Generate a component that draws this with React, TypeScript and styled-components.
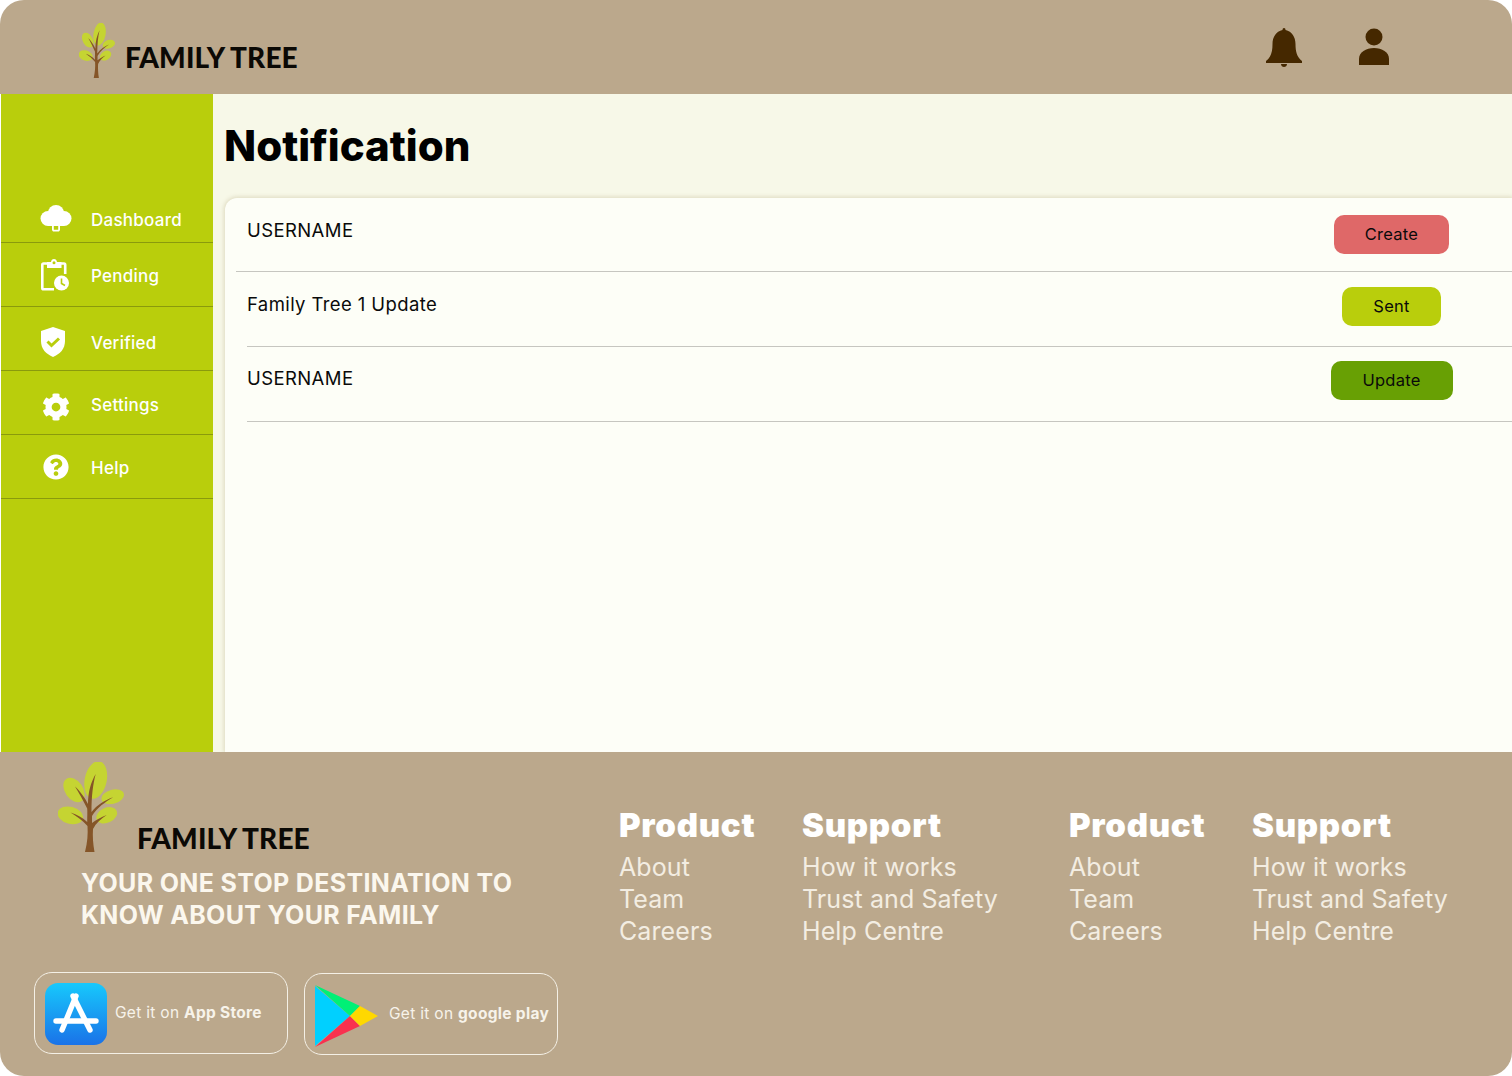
import React from 'react';
import styled, { createGlobalStyle } from 'styled-components';
import { FaCog, FaQuestionCircle } from 'react-icons/fa';

const GlobalStyle = createGlobalStyle`
  html, body {
    margin: 0;
    padding: 0;
    background: #fff;
    font-family: Inter, "Open Sans", sans-serif;
  }
`;

const Page = styled.div`
  width: 1512px;
  height: 1076px;
  display: flex;
  flex-direction: column;
  overflow: hidden;
  border-radius: 24px;
  background: #fff;
`;

const Header = styled.header`
  height: 94px;
  flex: none;
  background: #bba88c;
  display: flex;
  align-items: flex-start;
  justify-content: space-between;
  padding: 23px 122px 0 79px;
  box-sizing: border-box;
`;

const Brand = styled.div`
  display: flex;
  align-items: flex-start;
`;

const TreeSvg = styled.svg<{ $w: number; $h: number }>`
  display: block;
  flex: none;
  width: ${p => p.$w}px;
  height: ${p => p.$h}px;
`;

const BrandName = styled.span<{ $gap: number; $top: number }>`
  margin: ${p => p.$top}px 0 0 ${p => p.$gap}px;
  font-family: "Lato", sans-serif;
  font-weight: 900;
  font-size: 28px;
  line-height: 32px;
  letter-spacing: 0.15px;
  color: #0b0905;
  white-space: nowrap;
`;

const HeaderIcons = styled.div`
  display: flex;
  gap: 56px;
  padding-top: 5px;
  align-items: flex-start;
`;

const Middle = styled.div`
  flex: 1;
  min-height: 0;
  display: flex;
  padding-left: 1px;
`;

const Sidebar = styled.nav`
  width: 212px;
  flex: none;
  background: #b9ce0c;
  padding-top: 92px;
  box-sizing: border-box;
`;

const NavRow = styled.div<{ $h: number }>`
  height: ${p => p.$h}px;
  box-sizing: border-box;
  display: flex;
  align-items: center;
  border-bottom: 1px solid #8a9a0d;
  color: #fff;
  font-size: 17px;
  font-weight: 500;
  letter-spacing: 0.25px;
`;

const NavIcon = styled.span<{ $left: number; $top: number }>`
  width: 90px;
  flex: none;
  box-sizing: border-box;
  padding: ${p => p.$top}px 0 0 ${p => p.$left}px;
  display: flex;
  align-items: center;
`;

const NavLabel = styled.span<{ $top: number }>`
  padding-top: ${p => p.$top}px;
`;

const Main = styled.main`
  flex: 1;
  min-width: 0;
  background: #f7f8e8;
  display: flex;
  flex-direction: column;
`;

const Title = styled.h1`
  margin: 0;
  padding: 26px 0 0 11px;
  height: 104px;
  box-sizing: border-box;
  font-size: 42px;
  line-height: 52px;
  font-weight: 800;
  color: #000;
`;

const Card = styled.section`
  flex: 1;
  margin-left: 12px;
  background: #fdfef7;
  border-top-left-radius: 12px;
  box-shadow: 0 0 4px 1px rgba(190, 180, 140, 0.45);
`;

const Row = styled.div<{ $inset: number; $btnTop: number; $h: number }>`
  height: ${p => p.$h}px;
  box-sizing: border-box;
  margin-left: ${p => p.$inset}px;
  padding: ${p => p.$btnTop}px 59px 0 ${p => 22 - p.$inset}px;
  border-bottom: 1px solid #c6c6c0;
  display: flex;
  justify-content: space-between;
  align-items: flex-start;
`;

const RowText = styled.span<{ $top: number }>`
  margin-top: ${p => p.$top}px;
  font-size: 18.5px;
  line-height: 22px;
  color: #0a0a0a;
  letter-spacing: 0.4px;
`;

const ButtonSlot = styled.div`
  width: 123px;
  display: flex;
  justify-content: center;
`;

const StatusButton = styled.button<{ $bg: string; $w: number }>`
  width: ${p => p.$w}px;
  height: 39px;
  padding: 0 0 2px;
  border: none;
  border-radius: 10px;
  background: ${p => p.$bg};
  color: #0a0a0a;
  font-family: inherit;
  font-size: 16.5px;
  letter-spacing: 0.25px;
`;

const Footer = styled.footer`
  height: 324px;
  flex: none;
  background: #bba88c;
  display: flex;
  box-sizing: border-box;
`;

const FooterLeft = styled.div`
  width: 619px;
  flex: none;
  padding: 10px 0 0 34px;
  box-sizing: border-box;
`;

const FooterBrand = styled.div`
  display: flex;
  align-items: flex-start;
  padding-left: 24px;
`;

const Tagline = styled.p`
  margin: 13px 0 0 47px;
  font-size: 25px;
  line-height: 32px;
  font-weight: 700;
  letter-spacing: 0.33px;
  color: #fbf7ee;
  white-space: nowrap;
`;

const StoreRow = styled.div`
  display: flex;
  gap: 16px;
  margin-top: 41px;
  align-items: flex-start;
`;

const StoreButton = styled.div<{ $top: number; $gap: number }>`
  width: 254px;
  height: 82px;
  box-sizing: border-box;
  margin-top: ${p => p.$top}px;
  border: 1px solid #f4f0e6;
  border-radius: 18px;
  padding: 2px 0 0 10px;
  display: flex;
  align-items: center;
  gap: ${p => p.$gap}px;
  font-size: 15.5px;
  letter-spacing: 0.3px;
  color: #f7f3ea;
  white-space: nowrap;
`;

const StoreText = styled.span`
  padding-bottom: 3px;
`;

const AppIcon = styled.svg`
  width: 62px;
  height: 62px;
  flex: none;
`;

const PlayIcon = styled.svg`
  width: 63px;
  height: 62px;
  flex: none;
  margin-top: 2px;
`;

const Columns = styled.div`
  flex: 1;
  display: grid;
  grid-template-columns: 183px 267px 183px 1fr;
  padding-top: 52px;
  align-items: start;
`;

const Column = styled.div`
  display: flex;
  flex-direction: column;
`;

const ColumnTitle = styled.h3`
  margin: 0 0 5px;
  font-size: 33px;
  line-height: 42px;
  font-weight: 900;
  letter-spacing: 0.7px;
  color: #fff;
`;

const ColumnLink = styled.a`
  font-size: 25px;
  line-height: 32px;
  color: #f3ede2;
  letter-spacing: 0.1px;
  white-space: nowrap;
`;

const Tree: React.FC<{ w: number; h: number }> = ({ w, h }) => (
  <TreeSvg $w={w} $h={h} viewBox="0 0 66 90" preserveAspectRatio="none">
    <g fill="#c5d432">
      <ellipse cx="37.7" cy="18" rx="11" ry="19" transform="rotate(12 37.7 18)" />
      <ellipse cx="16" cy="28" rx="9" ry="13.5" transform="rotate(-35 16 28)" />
      <ellipse cx="54.7" cy="34.7" rx="11.5" ry="7" transform="rotate(-15 54.7 34.7)" />
      <ellipse cx="12.3" cy="53.3" rx="13" ry="8.5" transform="rotate(15 12.3 53.3)" />
      <ellipse cx="48.7" cy="53.3" rx="11" ry="7.5" transform="rotate(-25 48.7 53.3)" />
    </g>
    <path
      fill="#855528"
      d="M27 90 C29.5 80 30 72 29.5 64 C24 58 18 54 12.5 50.5 C19 52.5 25 56 29.2 60 C29.2 54 29.5 50 29.2 46.5 C25 38 21 31 17 24.5 C22 29 27 36 30 42 C30 30 33 20 37.7 12 C35 22 33.5 34 33.5 50 C39 43 47 38 55.3 35.3 C47 40 39 46 34 54 L34 61 C38 58 43 55 48.7 53 C43 57 38 61 35 67 C34.5 74 35 82 36.5 90 Z"
    />
  </TreeSvg>
);

const BellIcon = () => (
  <svg width="36" height="39" viewBox="0 0 36 39" fill="#452800">
    <path d="M18 0 C19 0 19.5 .8 19.5 2 C26 3.5 29.5 9 29.5 16 C29.5 24 31 29 36 33 L36 35 L0 35 L0 33 C5 29 6.5 24 6.5 16 C6.5 9 10 3.5 16.5 2 C16.5 .8 17 0 18 0 Z" />
    <path d="M15 36 L21 36 C21 38 19.5 39 18 39 C16.5 39 15 38 15 36 Z" />
  </svg>
);

const PersonIcon = () => (
  <svg width="32" height="37" viewBox="0 0 32 37" fill="#452800">
    <circle cx="16" cy="9" r="8.5" />
    <path d="M1 37 L1 31 C1 24 8 20 16 20 C24 20 31 24 31 31 L31 37 Z" />
  </svg>
);

const CloudIcon = () => (
  <svg width="32" height="27" viewBox="0 0 32 27" fill="#fff">
    <circle cx="16" cy="8" r="8" />
    <circle cx="8" cy="13.5" r="7.5" />
    <circle cx="24" cy="13.5" r="7.5" />
    <rect x="8" y="8" width="16" height="13" />
    <path d="M12 21 L12 24.5 C12 25.8 12.8 26.6 14 26.6 L18 26.6 C19.2 26.6 20 25.8 20 24.5 L20 21 L18.2 21 L18.2 24.8 L13.8 24.8 L13.8 21 Z" />
  </svg>
);

const PendingIcon = () => (
  <svg width="28" height="32" viewBox="0 0 28 32">
    <path
      fill="none"
      stroke="#fff"
      strokeWidth="2.6"
      strokeLinejoin="round"
      d="M6 4.5 L2.5 4.5 C1.7 4.5 1.3 5 1.3 5.8 L1.3 29 C1.3 29.8 1.7 30.3 2.5 30.3 L13 30.3 M20 4.5 L23 4.5 C23.8 4.5 24.2 5 24.2 5.8 L24.2 15"
    />
    <path fill="#fff" fillRule="evenodd" d="M6 3 L10 3 C10.3 1.2 11.3 0 13 0 C14.7 0 15.7 1.2 16 3 L20.5 3 L20.5 9 L6 9 Z M13 2.2 A1.5 1.5 0 1 0 13 5.2 A1.5 1.5 0 1 0 13 2.2 Z" />
    <circle cx="20.5" cy="24" r="7.5" fill="#fff" />
    <path d="M20.5 19.5 L20.5 24.5 L24 26.5" fill="none" stroke="#b9ce0c" strokeWidth="1.6" />
  </svg>
);

const ShieldIcon = () => (
  <svg width="24" height="30" viewBox="0 0 24 30">
    <path fill="#fff" d="M12 0 L24 4 L24 14 C24 22 19 27 12 30 C5 27 0 22 0 14 L0 4 Z" />
    <path d="M6.5 14.5 L10.5 18.5 L18 11.5" fill="none" stroke="#b9ce0c" strokeWidth="3" />
  </svg>
);

const AppStoreIcon = () => (
  <AppIcon viewBox="0 0 62 62">
    <defs>
      <linearGradient id="appGrad" x1="0" y1="0" x2="0" y2="1">
        <stop offset="0" stopColor="#17c9fc" />
        <stop offset="1" stopColor="#1a72e8" />
      </linearGradient>
    </defs>
    <rect width="62" height="62" rx="13" fill="url(#appGrad)" />
    <g stroke="#fff" strokeWidth="5.4" strokeLinecap="round" fill="none">
      <path d="M11 38 L51 38" />
      <path d="M31 13 L17 47" />
      <path d="M28 13 L45 47" />
    </g>
  </AppIcon>
);

const GooglePlayIcon = () => (
  <PlayIcon viewBox="0 0 63 62">
    <path fill="#00d0ff" d="M0 1 L35 31 L0 61 Z" />
    <path fill="#00f076" d="M0 0 L45 21 L35 31 Z" />
    <path fill="#f9314f" d="M0 62 L35 31 L45 41 Z" />
    <path fill="#ffd800" d="M45 21 L63 31 L45 41 L35 31 Z" />
  </PlayIcon>
);

const navItems = [
  { label: 'Dashboard', h: 57, left: 39, iconTop: 9, textTop: 12, icon: <CloudIcon /> },
  { label: 'Pending', h: 64, left: 40, iconTop: 1, textTop: 2, icon: <PendingIcon /> },
  { label: 'Verified', h: 64, left: 40, iconTop: 7, textTop: 9, icon: <ShieldIcon /> },
  { label: 'Settings', h: 64, left: 41, iconTop: 9, textTop: 5, icon: <FaCog size={28} color="#fff" /> },
  { label: 'Help', h: 64, left: 42, iconTop: 1, textTop: 3, icon: <FaQuestionCircle size={26} color="#fff" /> },
];

const rows = [
  { text: 'USERNAME', h: 74, inset: 11, btnTop: 17, textTop: 4, action: 'Create', bg: '#df6868', w: 115 },
  { text: 'Family Tree 1 Update', h: 75, inset: 22, btnTop: 15, textTop: 6, action: 'Sent', bg: '#b9ce0c', w: 99 },
  { text: 'USERNAME', h: 75, inset: 22, btnTop: 14, textTop: 6, action: 'Update', bg: '#68a004', w: 122 },
];

const footerColumns = [
  { title: 'Product', links: ['About', 'Team', 'Careers'] },
  { title: 'Support', links: ['How it works', 'Trust and Safety', 'Help Centre'] },
  { title: 'Product', links: ['About', 'Team', 'Careers'] },
  { title: 'Support', links: ['How it works', 'Trust and Safety', 'Help Centre'] },
];

const App: React.FC = () => {
  return (
    <Page>
      <GlobalStyle />
      <Header>
        <Brand>
          <Tree w={36} h={55} />
          <BrandName $gap={10} $top={18}>FAMILY TREE</BrandName>
        </Brand>
        <HeaderIcons>
          <BellIcon />
          <PersonIcon />
        </HeaderIcons>
      </Header>
      <Middle>
        <Sidebar>
          {navItems.map(item => (
            <NavRow key={item.label} $h={item.h}>
              <NavIcon $left={item.left} $top={item.iconTop}>{item.icon}</NavIcon>
              <NavLabel $top={item.textTop}>{item.label}</NavLabel>
            </NavRow>
          ))}
        </Sidebar>
        <Main>
          <Title>Notification</Title>
          <Card>
            {rows.map((row, index) => (
              <Row key={index} $inset={row.inset} $btnTop={row.btnTop} $h={row.h}>
                <RowText $top={row.textTop}>{row.text}</RowText>
                <ButtonSlot>
                  <StatusButton $bg={row.bg} $w={row.w}>{row.action}</StatusButton>
                </ButtonSlot>
              </Row>
            ))}
          </Card>
        </Main>
      </Middle>
      <Footer>
        <FooterLeft>
          <FooterBrand>
            <Tree w={66} h={90} />
            <BrandName $gap={13} $top={60}>FAMILY TREE</BrandName>
          </FooterBrand>
          <Tagline>
            YOUR ONE STOP DESTINATION TO
            <br />
            KNOW ABOUT YOUR FAMILY
          </Tagline>
          <StoreRow>
            <StoreButton $top={0} $gap={8}>
              <AppStoreIcon />
              <StoreText>Get it on <b>App Store</b></StoreText>
            </StoreButton>
            <StoreButton $top={1} $gap={11}>
              <GooglePlayIcon />
              <StoreText>Get it on <b>google play</b></StoreText>
            </StoreButton>
          </StoreRow>
        </FooterLeft>
        <Columns>
          {footerColumns.map((col, index) => (
            <Column key={index}>
              <ColumnTitle>{col.title}</ColumnTitle>
              {col.links.map(link => (
                <ColumnLink key={link}>{link}</ColumnLink>
              ))}
            </Column>
          ))}
        </Columns>
      </Footer>
    </Page>
  );
};

export default App;
